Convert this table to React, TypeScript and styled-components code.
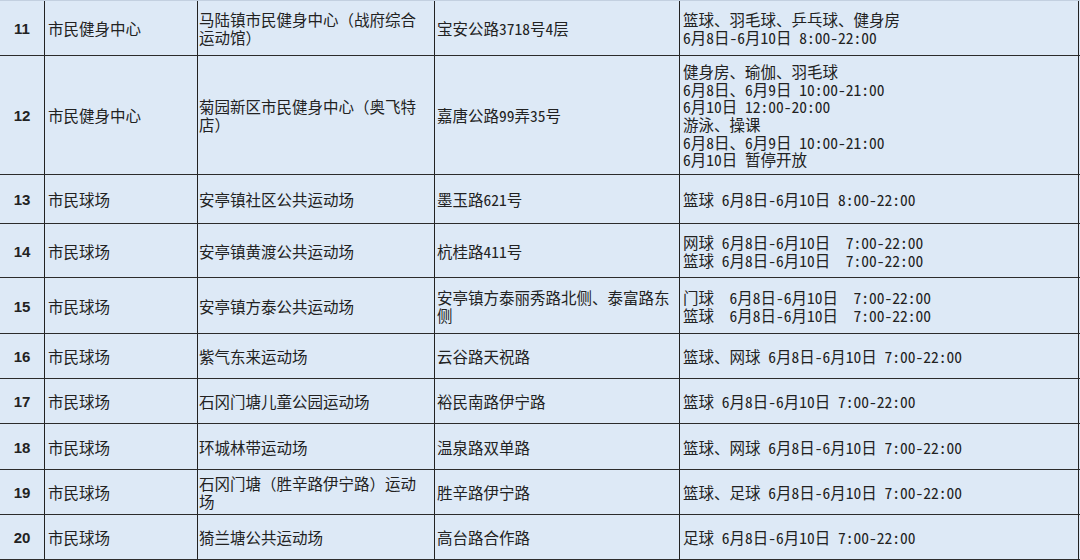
import React from 'react'
import styled, { createGlobalStyle } from 'styled-components'

const GlobalStyle = createGlobalStyle`
  html, body {
    margin: 0;
    padding: 0;
    background: #dde9f6;
  }
  body {
    width: 1080px;
    height: 560px;
    overflow: hidden;
  }
`

const COLS = '45px 153px 237px 245px 399px'

const Sheet = styled.div`
  width: 1080px;
  border-top: 1px solid #c3d0e0;
  background: #dde9f6;
  color: #222;
  font-family: "Noto Sans CJK SC", "Noto Sans", sans-serif;
  font-size: 15.5px;
  line-height: 17.6px;
  font-feature-settings: "hwid";
`

const Row = styled.div<{ $h: number }>`
  display: grid;
  grid-template-columns: ${COLS};
  height: ${p => p.$h}px;
  box-sizing: border-box;
  border-bottom: 1px solid #2b2b2b;
`

const Cell = styled.div<{ $pad?: number }>`
  display: flex;
  align-items: center;
  box-sizing: border-box;
  border-right: 1px solid #222;
  padding: 2px 6px 0 ${p => p.$pad ?? 2}px;
  overflow: hidden;
`

const NoCell = styled(Cell)`
  justify-content: center;
  padding: 2px 0 0 0;
  font-family: "Liberation Sans", Arial, sans-serif;
  font-weight: bold;
  font-size: 15px;
  font-feature-settings: normal;
`

const Lines = styled.div`
  white-space: pre;
`

// full-width brackets keep their full width
const Wide = styled.span`
  font-feature-settings: normal;
`

function Text({ value }: { value: string }) {
  const parts = value.split(/([（）])/)
  return (
    <span>
      {parts.map((p, i) => (p === '（' || p === '）' ? <Wide key={i}>{p}</Wide> : p))}
    </span>
  )
}

type Item = {
  no: number
  h: number
  kind: string
  name: string
  addr: string
  hours: string[]
}

const items: Item[] = [
  {
    no: 11, h: 55, kind: '市民健身中心',
    name: '马陆镇市民健身中心（战府综合运动馆）',
    addr: '宝安公路3718号4层',
    hours: ['篮球、羽毛球、乒乓球、健身房', '6月8日-6月10日 8:00-22:00'],
  },
  {
    no: 12, h: 119, kind: '市民健身中心',
    name: '菊园新区市民健身中心（奥飞特店）',
    addr: '嘉唐公路99弄35号',
    hours: [
      '健身房、瑜伽、羽毛球',
      '6月8日、6月9日 10:00-21:00',
      '6月10日 12:00-20:00',
      '游泳、操课',
      '6月8日、6月9日 10:00-21:00',
      '6月10日 暂停开放',
    ],
  },
  {
    no: 13, h: 49, kind: '市民球场',
    name: '安亭镇社区公共运动场',
    addr: '墨玉路621号',
    hours: ['篮球 6月8日-6月10日 8:00-22:00'],
  },
  {
    no: 14, h: 54, kind: '市民球场',
    name: '安亭镇黄渡公共运动场',
    addr: '杭桂路411号',
    hours: ['网球 6月8日-6月10日  7:00-22:00', '篮球 6月8日-6月10日  7:00-22:00'],
  },
  {
    no: 15, h: 56, kind: '市民球场',
    name: '安亭镇方泰公共运动场',
    addr: '安亭镇方泰丽秀路北侧、泰富路东侧',
    hours: ['门球  6月8日-6月10日  7:00-22:00', '篮球  6月8日-6月10日  7:00-22:00'],
  },
  {
    no: 16, h: 45, kind: '市民球场',
    name: '紫气东来运动场',
    addr: '云谷路天祝路',
    hours: ['篮球、网球 6月8日-6月10日 7:00-22:00'],
  },
  {
    no: 17, h: 45, kind: '市民球场',
    name: '石冈门塘儿童公园运动场',
    addr: '裕民南路伊宁路',
    hours: ['篮球 6月8日-6月10日 7:00-22:00'],
  },
  {
    no: 18, h: 46, kind: '市民球场',
    name: '环城林带运动场',
    addr: '温泉路双单路',
    hours: ['篮球、网球 6月8日-6月10日 7:00-22:00'],
  },
  {
    no: 19, h: 45, kind: '市民球场',
    name: '石冈门塘（胜辛路伊宁路）运动场',
    addr: '胜辛路伊宁路',
    hours: ['篮球、足球 6月8日-6月10日 7:00-22:00'],
  },
  {
    no: 20, h: 45, kind: '市民球场',
    name: '猗兰塘公共运动场',
    addr: '高台路合作路',
    hours: ['足球 6月8日-6月10日 7:00-22:00'],
  },
]

export default function App() {
  return (
    <>
      <GlobalStyle />
      <Sheet>
        {items.map(it => (
          <Row key={it.no} $h={it.h}>
            <NoCell>{it.no}</NoCell>
            <Cell $pad={3}>{it.kind}</Cell>
            <Cell $pad={1}>
              <Text value={it.name} />
            </Cell>
            <Cell $pad={2}>{it.addr}</Cell>
            <Cell $pad={3}>
              <Lines>{it.hours.join('\n')}</Lines>
            </Cell>
          </Row>
        ))}
      </Sheet>
    </>
  )
}
